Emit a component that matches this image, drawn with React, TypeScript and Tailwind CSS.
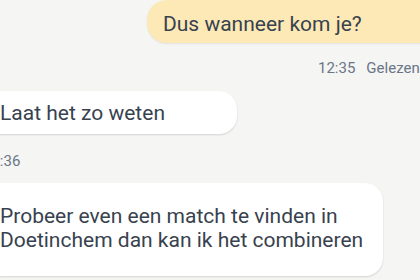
import React from "react";

const font = { fontFamily: "Roboto, 'Noto Sans', sans-serif" };

const Incoming = ({ lines, width, className }: { lines: string[]; width: string; className: string }) => (
    <div
        className={`${width} ${className} bg-white rounded-[18px] pl-4 pr-5 text-[21px] leading-[24px] text-[#38424e] shadow-[0_1px_2px_rgba(0,0,0,0.14)]`}
    >
        {lines.map((line, i) => (
            <div key={i} className="whitespace-nowrap">
                {line}
            </div>
        ))}
    </div>
);

export default function App() {
    return (
        <div className="w-[420px] h-[280px] overflow-hidden bg-[#f5f5f4]" style={font}>
            <div className="ml-[-16px] w-[480px] flex flex-col">
                <div className="flex justify-end">
                    <div className="ml-[163px] flex-1 h-[43px] bg-[#fde9b6] rounded-l-[20px] rounded-r-[20px] pl-4 flex items-center pt-[6px] text-[21px] text-[#38424e] shadow-[0_1px_2px_rgba(0,0,0,0.08)]">
                        Dus wanneer kom je?
                    </div>
                </div>

                <div className="pl-[334px] pt-[16px] flex gap-[11px] text-[15px] leading-[18px] text-[#6a7586]">
                    <span>12:35</span>
                    <span>Gelezen</span>
                </div>

                <Incoming
                    lines={["Laat het zo weten"]}
                    width="w-[253px]"
                    className="mt-[14px] h-[43px] flex flex-col justify-center"
                />

                <div className="ml-[-1px] mt-[18px] text-[15px] leading-[18px] text-[#6a7586]">12:36</div>

                <Incoming
                    lines={["Probeer even een match te vinden in", "Doetinchem dan kan ik het combineren"]}
                    width="w-[399px]"
                    className="mt-[13px] pt-[21px] pb-[24px]"
                />
            </div>
        </div>
    );
}
